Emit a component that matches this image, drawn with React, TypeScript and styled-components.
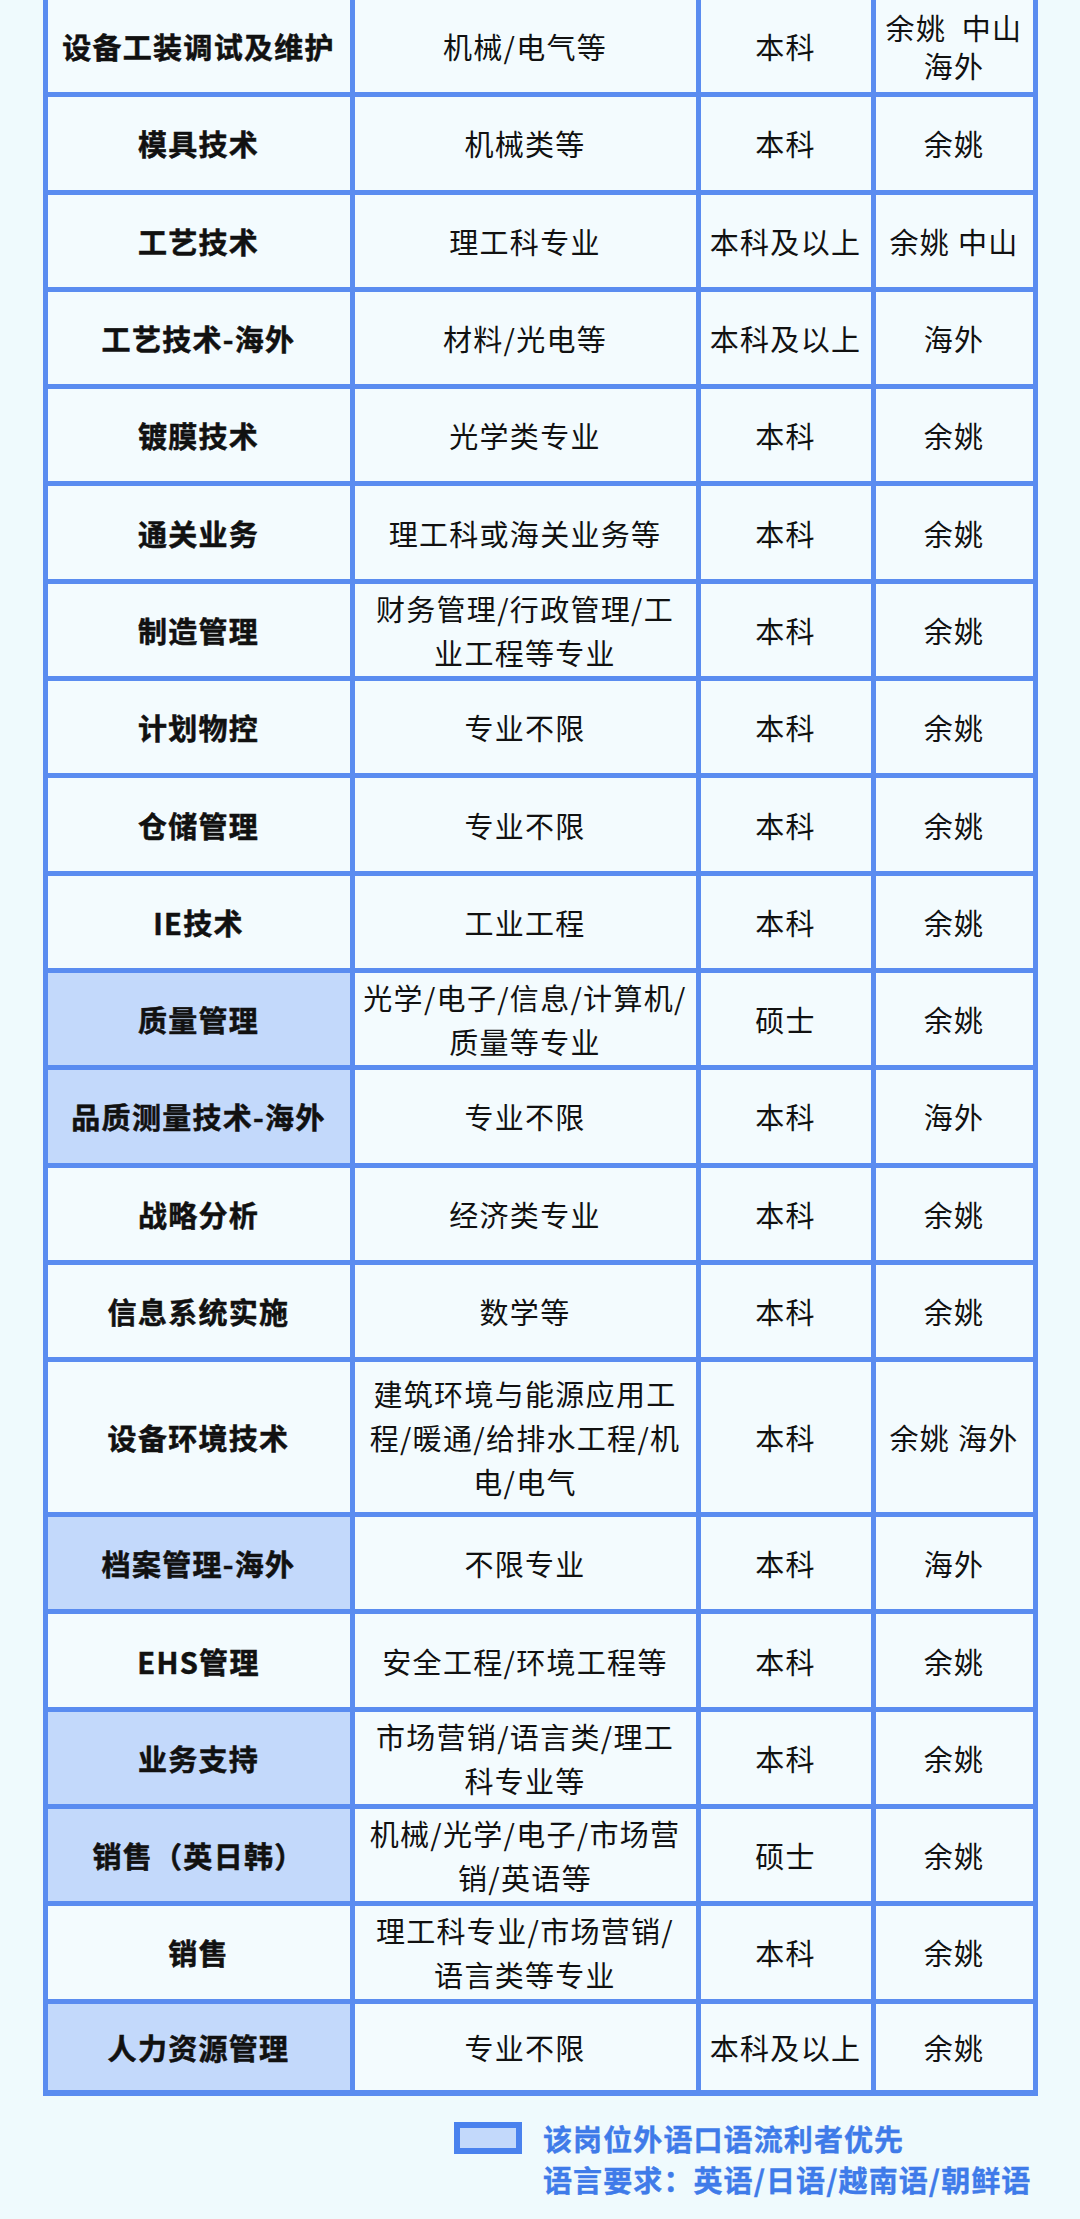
import styled, { createGlobalStyle } from 'styled-components';

const blue = '#5a8cf0';

export default function App() {
  return (
    <>
      <GlobalStyle />
      <Page>
        <Table>
          {jobs.map((job, index) => {
            const height = job.height ?? (index === jobs.length - 1 ? 86 : 92.3);
            return (
              <Row key={index}>
                <TitleCell $marked={job.marked} $height={height}>
                  {job.title}
                </TitleCell>
                <Cell $height={height}>
                  <Lines>{lines(job.major)}</Lines>
                </Cell>
                <Cell $height={height}>{job.degree}</Cell>
                <Cell $height={height} $tight={job.tight}>
                  <Lines>{lines(job.place)}</Lines>
                </Cell>
              </Row>
            );
          })}
        </Table>
        <Legend>
          <LegendBox />
          <LegendText>
            <p>该岗位外语口语流利者优先</p>
            <p>语言要求：英语/日语/越南语/朝鲜语</p>
          </LegendText>
        </Legend>
      </Page>
    </>
  );
}

function lines(text: string) {
  return text.split('|').map((line, index) => <Line key={index}>{line}</Line>);
}

const GlobalStyle = createGlobalStyle`
  html, body {
    margin: 0;
    padding: 0;
    background: #effafd;
  }
  body {
    font-family: "Noto Sans CJK SC", "Noto Sans", sans-serif;
    color: #111;
  }
`;

const Page = styled.div`
  width: 1080px;
  min-height: 2219px;
  overflow: hidden;
  background: #effafd;
`;

const Table = styled.div`
  width: 995px;
  margin: -5px auto 0;
  box-sizing: border-box;
  padding: 5px 5px 6px;
  background: ${blue};
  display: grid;
  grid-template-columns: 302px 341px 170px 157px;
  row-gap: 5px;
  column-gap: 5px;
`;

const Row = styled.div`
  display: contents;
`;

const Cell = styled.div<{ $tight?: boolean; $height: number }>`
  height: ${(p) => p.$height}px;
  padding: 0 4px;
  box-sizing: border-box;
  background: #f3fbfe;
  display: flex;
  align-items: center;
  justify-content: center;
  text-align: center;
  font-size: 29px;
  letter-spacing: 1.3px;
  line-height: ${(p) => (p.$tight ? '38px' : '44px')};
  white-space: pre;
`;

const Lines = styled.div`
  display: flex;
  flex-direction: column;
  align-items: center;
`;

const Line = styled.span`
  display: block;
`;

const TitleCell = styled(Cell)<{ $marked?: boolean }>`
  font-weight: 700;
  -webkit-text-stroke: 0.5px #111;
  background: ${(p) => (p.$marked ? '#c3d9fb' : '#f3fbfe')};
`;

const Legend = styled.div`
  display: flex;
  align-items: flex-start;
  gap: 21px;
  padding: 22px 0 0 454px;
`;

const LegendBox = styled.div`
  width: 68px;
  height: 32px;
  margin-top: 4px;
  box-sizing: border-box;
  border: 6px solid #4a82ee;
  background: #c3d9fb;
`;

const LegendText = styled.div`
  color: #3f7be9;
  -webkit-text-stroke: 0.4px #3f7be9;
  font-size: 29px;
  font-weight: 700;
  letter-spacing: 1.1px;
  line-height: 41px;

  p {
    margin: 0;
  }
`;

type Job = {
  title: string;
  major: string;
  degree: string;
  place: string;
  marked?: boolean;
  tight?: boolean;
  height?: number;
};

const jobs: Job[] = [
  { title: '设备工装调试及维护', major: '机械/电气等', degree: '本科', place: '余姚  中山|海外', tight: true },
  { title: '模具技术', major: '机械类等', degree: '本科', place: '余姚' },
  { title: '工艺技术', major: '理工科专业', degree: '本科及以上', place: '余姚 中山' },
  { title: '工艺技术-海外', major: '材料/光电等', degree: '本科及以上', place: '海外' },
  { title: '镀膜技术', major: '光学类专业', degree: '本科', place: '余姚' },
  { title: '通关业务', major: '理工科或海关业务等', degree: '本科', place: '余姚' },
  { title: '制造管理', major: '财务管理/行政管理/工|业工程等专业', degree: '本科', place: '余姚' },
  { title: '计划物控', major: '专业不限', degree: '本科', place: '余姚' },
  { title: '仓储管理', major: '专业不限', degree: '本科', place: '余姚' },
  { title: 'IE技术', major: '工业工程', degree: '本科', place: '余姚' },
  { title: '质量管理', major: '光学/电子/信息/计算机/|质量等专业', degree: '硕士', place: '余姚', marked: true },
  { title: '品质测量技术-海外', major: '专业不限', degree: '本科', place: '海外', marked: true },
  { title: '战略分析', major: '经济类专业', degree: '本科', place: '余姚' },
  { title: '信息系统实施', major: '数学等', degree: '本科', place: '余姚' },
  { title: '设备环境技术', major: '建筑环境与能源应用工|程/暖通/给排水工程/机|电/电气', degree: '本科', place: '余姚 海外', height: 150 },
  { title: '档案管理-海外', major: '不限专业', degree: '本科', place: '海外', marked: true },
  { title: 'EHS管理', major: '安全工程/环境工程等', degree: '本科', place: '余姚' },
  { title: '业务支持', major: '市场营销/语言类/理工|科专业等', degree: '本科', place: '余姚', marked: true },
  { title: '销售（英日韩）', major: '机械/光学/电子/市场营|销/英语等', degree: '硕士', place: '余姚', marked: true },
  { title: '销售', major: '理工科专业/市场营销/|语言类等专业', degree: '本科', place: '余姚' },
  { title: '人力资源管理', major: '专业不限', degree: '本科及以上', place: '余姚', marked: true },
];
